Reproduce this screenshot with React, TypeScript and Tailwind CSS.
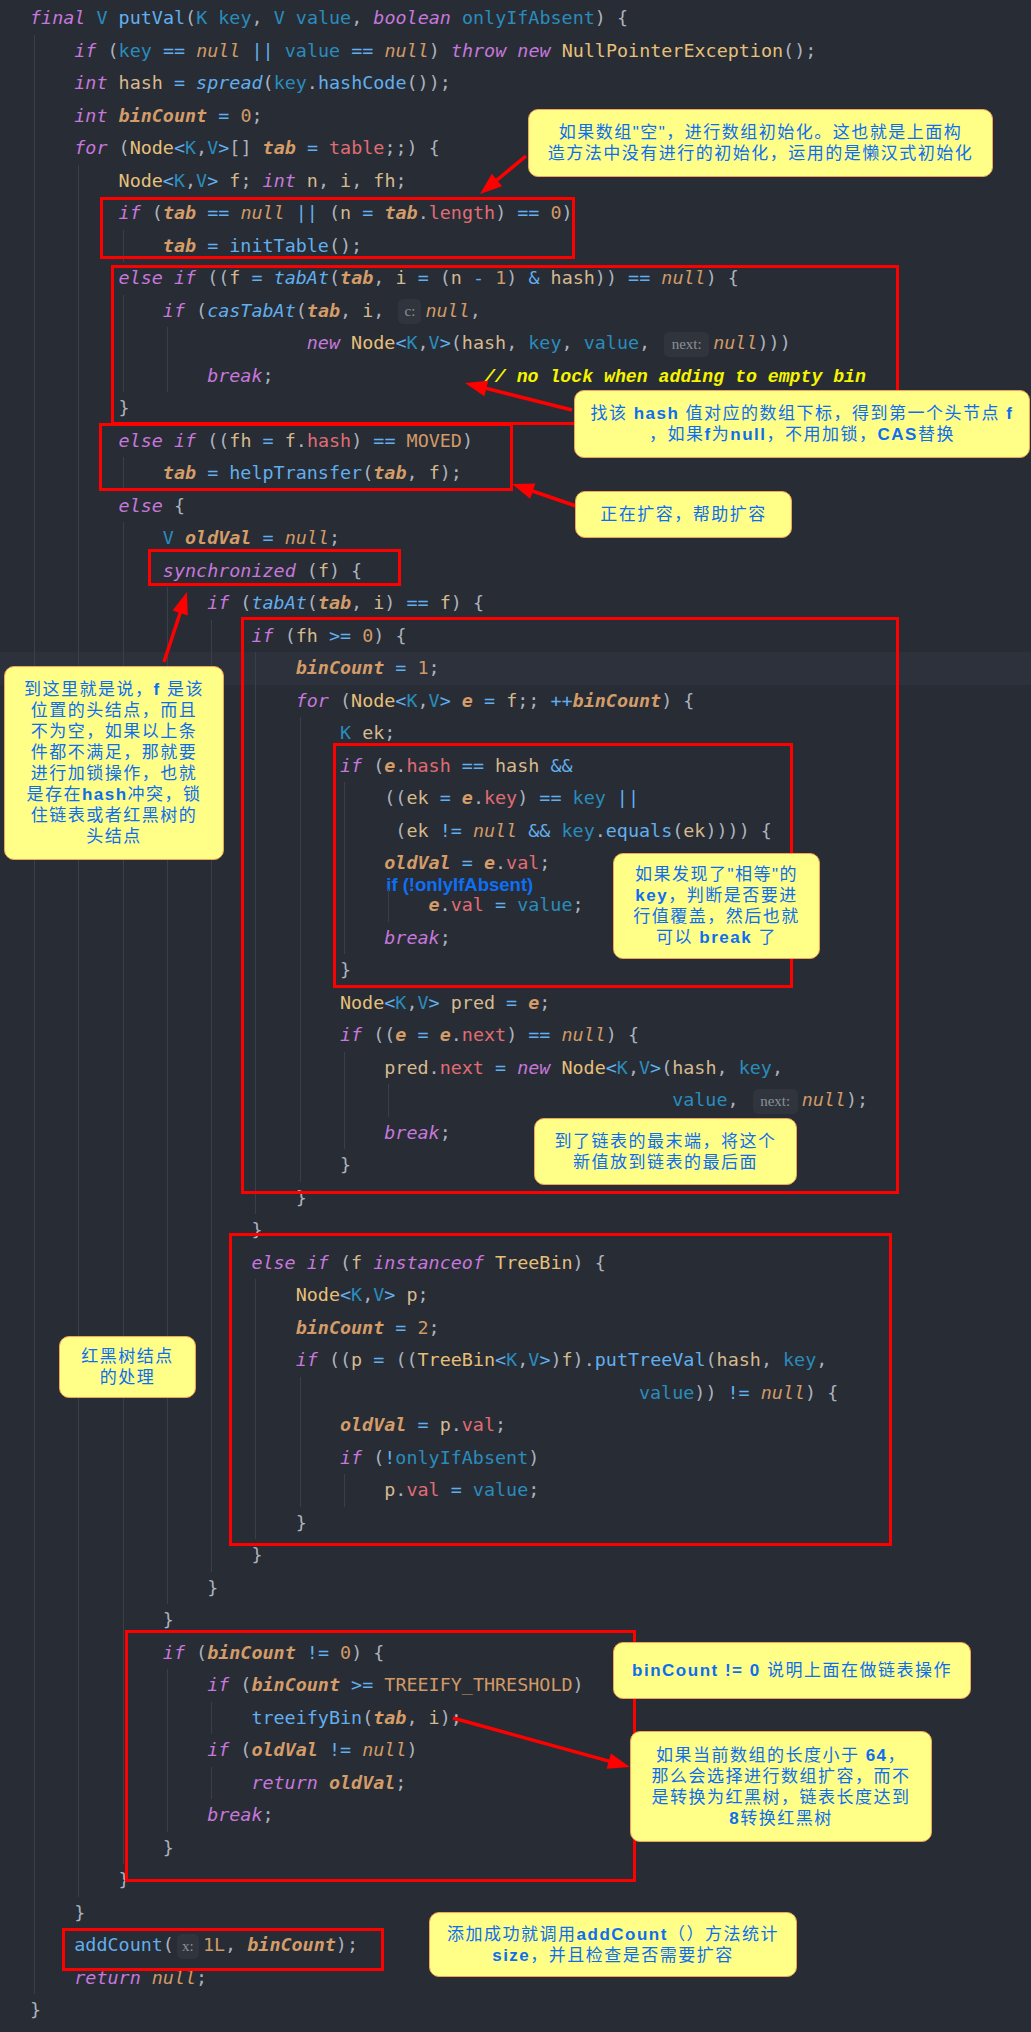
import React from "react";

type Row = { g: number; col: number; code: string; hl?: boolean; gap?: boolean };

const r = (g: number, code: string, col = g * 4, hl = false): Row => ({ g, col, code, hl });

const COMMENT = "// no lock when adding to empty bin";

const rows: Row[] = [
  r(0, "final V putVal(K key, V value, boolean onlyIfAbsent) {"),
  r(1, "if (key == null || value == null) throw new NullPointerException();"),
  r(1, "int hash = spread(key.hashCode());"),
  r(1, "int binCount = 0;"),
  r(1, "for (Node<K,V>[] tab = table;;) {"),
  r(2, "Node<K,V> f; int n, i, fh;"),
  r(2, "if (tab == null || (n = tab.length) == 0)"),
  r(3, "tab = initTable();"),
  r(2, "else if ((f = tabAt(tab, i = (n - 1) & hash)) == null) {"),
  r(3, "if (casTabAt(tab, i, ⟦c:⟧null,"),
  r(4, "new Node<K,V>(hash, key, value, ⟦next:⟧null)))", 25),
  r(4, "break;                   " + COMMENT),
  r(2, "}"),
  r(2, "else if ((fh = f.hash) == MOVED)"),
  r(3, "tab = helpTransfer(tab, f);"),
  r(2, "else {"),
  r(3, "V oldVal = null;"),
  r(3, "synchronized (f) {"),
  r(4, "if (tabAt(tab, i) == f) {"),
  r(5, "if (fh >= 0) {"),
  r(6, "binCount = 1;", 24, true),
  r(6, "for (Node<K,V> e = f;; ++binCount) {"),
  r(7, "K ek;"),
  r(7, "if (e.hash == hash &&"),
  r(8, "((ek = e.key) == key ||"),
  r(8, "(ek != null && key.equals(ek)))) {", 33),
  r(8, "oldVal = e.val;"),
  { g: 8, col: 32, code: "", gap: true },
  r(9, "e.val = value;"),
  r(8, "break;"),
  r(7, "}"),
  r(7, "Node<K,V> pred = e;"),
  r(7, "if ((e = e.next) == null) {"),
  r(8, "pred.next = new Node<K,V>(hash, key,"),
  r(9, "value, ⟦next:⟧null);", 58),
  r(8, "break;"),
  r(7, "}"),
  r(6, "}"),
  r(5, "}"),
  r(5, "else if (f instanceof TreeBin) {"),
  r(6, "Node<K,V> p;"),
  r(6, "binCount = 2;"),
  r(6, "if ((p = ((TreeBin<K,V>)f).putTreeVal(hash, key,"),
  r(7, "value)) != null) {", 55),
  r(7, "oldVal = p.val;"),
  r(7, "if (!onlyIfAbsent)"),
  r(8, "p.val = value;"),
  r(6, "}"),
  r(5, "}"),
  r(4, "}"),
  r(3, "}"),
  r(3, "if (binCount != 0) {"),
  r(4, "if (binCount >= TREEIFY_THRESHOLD)"),
  r(5, "treeifyBin(tab, i);"),
  r(4, "if (oldVal != null)"),
  r(5, "return oldVal;"),
  r(4, "break;"),
  r(3, "}"),
  r(2, "}"),
  r(1, "}"),
  r(1, "addCount(⟦x:⟧1L, binCount);"),
  r(1, "return null;"),
  r(0, "}"),
];

const KW = new Set(["final", "if", "int", "for", "throw", "new", "boolean", "else", "break", "synchronized", "return", "instanceof"]);
const STATIC_M = new Set(["spread", "tabAt", "casTabAt"]);
const REASSIGNED = new Set(["tab", "binCount", "oldVal", "e"]);
const PARAMS = new Set(["key", "value", "onlyIfAbsent", "K", "V"]);

const C = {
  kw: "text-[#c678dd] italic",
  nul: "text-[#d19a66] italic",
  num: "text-[#d19a66]",
  prm: "text-[#2a8cbd]",
  loc: "text-[#d6ba8f]",
  re: "text-[#d49c69] font-bold italic",
  cls: "text-[#e5c07b]",
  fld: "text-[#e06c75]",
  mth: "text-[#61afef]",
  smth: "text-[#61afef] italic",
  op: "text-[#61afef]",
  pun: "text-[#abb2bf]",
  cmt: "text-[#f5f500] font-bold italic font-['Liberation_Mono',monospace] text-[18.2px]",
};

const TOKEN = /(⟦[^⟧]*⟧|\/\/.*$|[A-Za-z_][A-Za-z0-9_]*|\d+L?|==|!=|>=|\|\||&&|\+\+|[=<>!&\-]|[(){}\[\];,.]|\s+)/g;

function Hint({ label }: { label: string }) {
  const w = label === "next:" ? "w-[45px]" : label === "c:" ? "w-[23px]" : "w-[22px]";
  return (
    <span
      className={`inline-block ${w} h-[25px] leading-[25px] ml-[3px] mr-[4px] rounded-[5px] bg-[#30343c] text-center align-middle text-[15px] text-[#8b9099] font-['Liberation_Serif',serif]`}
    >
      {label}
    </span>
  );
}

function Code({ code }: { code: string }) {
  const toks = code.match(TOKEN) || [];
  const out: React.ReactNode[] = [];
  const prevSig = (i: number) => {
    for (let j = i - 1; j >= 0; j--) if (!/^\s+$/.test(toks[j])) return toks[j];
    return "";
  };
  const nextSig = (i: number) => {
    for (let j = i + 1; j < toks.length; j++) if (!/^\s+$/.test(toks[j])) return toks[j];
    return "";
  };
  toks.forEach((t, i) => {
    let cls = C.pun;
    if (t.startsWith("⟦")) {
      out.push(<Hint key={i} label={t.slice(1, -1)} />);
      return;
    }
    if (/^\s+$/.test(t)) {
      out.push(t);
      return;
    }
    if (t.startsWith("//")) cls = C.cmt;
    else if (/^[A-Za-z_]/.test(t)) {
      const prev = prevSig(i);
      const next = nextSig(i);
      if (KW.has(t)) cls = C.kw;
      else if (t === "null") cls = C.nul;
      else if (prev === ".") cls = next === "(" ? C.mth : C.fld;
      else if (STATIC_M.has(t)) cls = C.smth;
      else if (PARAMS.has(t)) cls = C.prm;
      else if (/^[A-Z][A-Z_]+$/.test(t)) cls = C.num;
      else if (/^[A-Z]/.test(t)) cls = C.cls;
      else if (next === "(") cls = C.mth;
      else if (t === "table") cls = C.fld;
      else if (REASSIGNED.has(t)) cls = C.re;
      else cls = C.loc;
    } else if (/^\d/.test(t)) cls = C.num;
    else if (/^[=<>!&|+\-]/.test(t)) cls = C.op;
    out.push(
      <span key={i} className={cls}>
        {t}
      </span>
    );
  });
  return <>{out}</>;
}

function Guides({ n, tall }: { n: number; tall?: boolean }) {
  return (
    <>
      {Array.from({ length: n }).map((_, i) => (
        <span
          key={i}
          className={`inline-block w-[4ch] ${tall ? "h-[9.5px]" : "h-[32.5px]"} align-top bg-[linear-gradient(90deg,transparent_4px,#3b4048_4px,#3b4048_5px,transparent_5px)]`}
        />
      ))}
    </>
  );
}

function Rich({ s }: { s: string }) {
  return (
    <>
      {s.split("**").map((p, i) =>
        i % 2 ? (
          <b key={i} className="font-bold">
            {p}
          </b>
        ) : (
          <span key={i}>{p}</span>
        )
      )}
    </>
  );
}

const NOTE =
  "absolute rounded-[10px] border-[1.5px] border-[#f3a35a] bg-[#ffff88] flex flex-col items-center justify-center text-center text-[#0d6ef0] text-[17px] leading-[21px] tracking-[1.5px] font-['Liberation_Sans','Noto_Sans_CJK_SC',sans-serif] whitespace-pre";

const notes: { cls: string; lines: string[] }[] = [
  { cls: "left-[528px] top-[109px] w-[465px] h-[68px]", lines: ["如果数组\"空\"，进行数组初始化。这也就是上面构", "造方法中没有进行的初始化，运用的是懒汉式初始化"] },
  { cls: "left-[574px] top-[390px] w-[456px] h-[68px]", lines: ["找该 **hash** 值对应的数组下标，得到第一个头节点 **f**", "，如果**f**为**null**，不用加锁，**CAS**替换"] },
  { cls: "left-[575px] top-[491px] w-[217px] h-[47px]", lines: ["正在扩容，帮助扩容"] },
  {
    cls: "left-[4px] top-[666px] w-[220px] h-[194px]",
    lines: ["到这里就是说，**f** 是该", "位置的头结点，而且", "不为空，如果以上条", "件都不满足，那就要", "进行加锁操作，也就", "是存在**hash**冲突，锁", "住链表或者红黑树的", "头结点"],
  },
  { cls: "left-[613px] top-[853px] w-[207px] h-[106px]", lines: ["如果发现了\"相等\"的", "**key**，判断是否要进", "行值覆盖，然后也就", "可以 **break** 了"] },
  { cls: "left-[534px] top-[1118px] w-[263px] h-[67px]", lines: ["到了链表的最末端，将这个", "新值放到链表的最后面"] },
  { cls: "left-[59px] top-[1336px] w-[137px] h-[62px]", lines: ["红黑树结点", "的处理"] },
  { cls: "left-[613px] top-[1642px] w-[358px] h-[57px]", lines: ["**binCount != 0** 说明上面在做链表操作"] },
  { cls: "left-[630px] top-[1731px] w-[302px] h-[111px]", lines: ["如果当前数组的长度小于 **64**，", "那么会选择进行数组扩容，而不", "是转换为红黑树，链表长度达到", "**8**转换红黑树"] },
  { cls: "left-[429px] top-[1912px] w-[368px] h-[65px]", lines: ["添加成功就调用**addCount**（）方法统计", "**size**，并且检查是否需要扩容"] },
];

const BOX = "absolute border-[3px] border-[#ff0000]";
const boxes = [
  "left-[100px] top-[197px] w-[475px] h-[62px]",
  "left-[111px] top-[265px] w-[788px] h-[160px]",
  "left-[99px] top-[423px] w-[414px] h-[68px]",
  "left-[148px] top-[549px] w-[253px] h-[37px]",
  "left-[241px] top-[617px] w-[658px] h-[577px]",
  "left-[333px] top-[743px] w-[460px] h-[245px]",
  "left-[229px] top-[1233px] w-[663px] h-[313px]",
  "left-[125px] top-[1630px] w-[511px] h-[252px]",
  "left-[62px] top-[1928px] w-[322px] h-[43px]",
];

const arrows = [
  [526, 156, 480, 194],
  [572, 410, 465, 383],
  [576, 506, 512, 484],
  [164, 662, 187, 592],
  [453, 1718, 630, 1767],
];

function Arrow({ a }: { a: number[] }) {
  const [x1, y1, x2, y2] = a;
  const dx = x2 - x1;
  const dy = y2 - y1;
  const len = Math.hypot(dx, dy);
  const ux = dx / len;
  const uy = dy / len;
  const hl = 22;
  const hw = 8;
  const bx = x2 - ux * hl;
  const by = y2 - uy * hl;
  const px = -uy;
  const py = ux;
  return (
    <g>
      <line x1={x1} y1={y1} x2={bx + ux * 2} y2={by + uy * 2} stroke="#ff0000" strokeWidth={3.5} />
      <polygon points={`${x2},${y2} ${bx + px * hw},${by + py * hw} ${bx - px * hw},${by - py * hw}`} fill="#ff0000" />
    </g>
  );
}

export default function App() {
  return (
    <div className="relative w-[1031px] h-[2032px] overflow-hidden bg-[#282c34]">
      <div className="flex flex-col pt-[2px] font-['DejaVu_Sans_Mono',monospace] text-[18.4px]">
        {rows.map((row, i) =>
          row.gap ? (
            <div key={i} className="flex items-center h-[9.5px] pl-[30px] whitespace-pre">
              <Guides n={row.g} tall />
              <span className="ml-[2px] font-['Liberation_Sans',sans-serif] font-bold text-[18.5px] leading-[9.5px] text-[#0f6ff2]">
                if (!onlyIfAbsent)
              </span>
            </div>
          ) : (
            <div key={i} className={`h-[32.5px] leading-[32.5px] pl-[30px] whitespace-pre ${row.hl ? "bg-[#2c313b]" : ""}`}>
              <Guides n={row.g} />
              {" ".repeat(Math.max(0, row.col - row.g * 4))}
              <Code code={row.code} />
            </div>
          )
        )}
      </div>

      {boxes.map((b, i) => (
        <div key={i} className={`${BOX} ${b}`} />
      ))}

      <svg className="absolute left-0 top-0 w-[1031px] h-[2032px] pointer-events-none" viewBox="0 0 1031 2032">
        {arrows.map((a, i) => (
          <Arrow key={i} a={a} />
        ))}
      </svg>

      {notes.map((n, i) => (
        <div key={i} className={`${NOTE} ${n.cls}`}>
          {n.lines.map((l, j) => (
            <div key={j}>
              <Rich s={l} />
            </div>
          ))}
        </div>
      ))}
    </div>
  );
}
